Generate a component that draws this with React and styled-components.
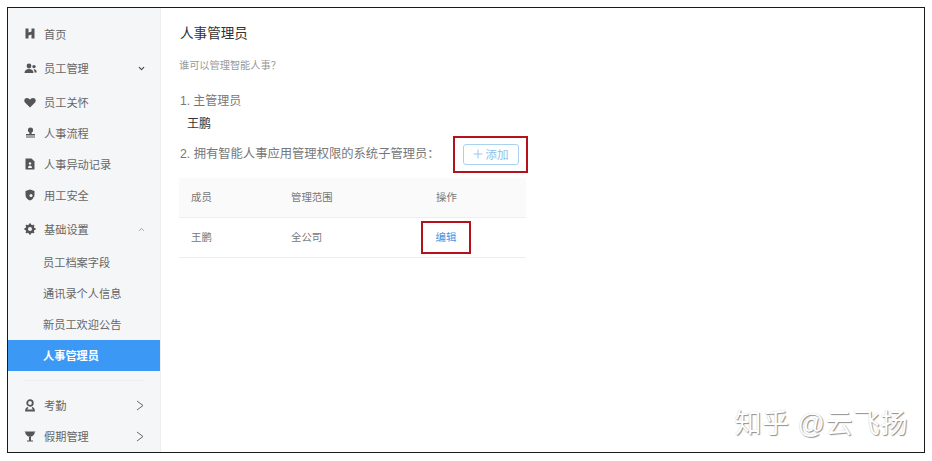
import React from 'react'
import styled, { createGlobalStyle } from 'styled-components'
import { ChevronDown, ChevronUp, Plus } from 'lucide-react'

const FONT = '"Liberation Sans", "Noto Sans CJK SC", sans-serif'

const GlobalStyle = createGlobalStyle`
  html, body { margin: 0; padding: 0; background: #fff; }
  body { width: 932px; height: 461px; overflow: hidden; font-family: ${FONT}; }
`

const Page = styled.div`
  width: 932px;
  height: 461px;
  padding: 7px 7px 8px 7px;
  box-sizing: border-box;
  position: relative;
`

const Frame = styled.div`
  display: flex;
  height: 100%;
  box-sizing: border-box;
  border: 1px solid #1a1a1a;
  overflow: hidden;
`

const Sidebar = styled.div`
  width: 152px;
  flex-shrink: 0;
  background: #f5f6f8;
  border-right: 1px solid #eceef0;
  padding-top: 9px;
  box-sizing: content-box;
`

const MenuRow = styled.div`
  display: flex;
  align-items: center;
  box-sizing: border-box;
  height: ${p => p.$h || 31}px;
  padding: 0 14px ${p => (p.$h ? 0 : 2)}px 15px;
  font-size: 11.2px;
  color: ${p => (p.$active ? '#fff' : '#666')};
  background: ${p => (p.$active ? '#3b99f5' : 'transparent')};
  font-weight: ${p => (p.$active ? 600 : 400)};
`

const SubRow = styled(MenuRow)`
  padding-left: 35px;
`

const IconSlot = styled.span`
  width: 14px;
  margin-right: 7px;
  flex-shrink: 0;
  display: flex;
  align-items: center;
  justify-content: center;
  color: #555;
`

const Label = styled.span`
  flex: 1;
  white-space: nowrap;
`

const Divider = styled.div`
  height: 1px;
  background: #ebedef;
  margin: 9px 16px 6px 16px;
`

const Arrow = styled.svg`
  margin-right: 2px;
  flex-shrink: 0;
`

const Content = styled.div`
  flex: 1;
  padding: 17px 0 0 18px;
  color: #666;
`

const Title = styled.div`
  font-size: 13.6px;
  line-height: 18px;
  color: #333;
  padding-left: 1px;
`

const Hint = styled.div`
  font-size: 10.2px;
  line-height: 14px;
  color: #999;
  margin-top: 16px;
`

const Step = styled.div`
  font-size: 12px;
  line-height: 16px;
  color: #777;
  margin-top: 20px;
  padding-left: 1px;
`

const AdminName = styled.div`
  font-size: 12px;
  line-height: 16px;
  color: #333;
  margin: 7px 0 0 8px;
`

const StepRow = styled.div`
  display: flex;
  align-items: center;
  width: 346px;
  margin-top: 9px;
  height: 26px;
  font-size: 12.3px;
  color: #777;
`

const StepText = styled.span`
  padding-left: 1px;
  margin-top: -3px;
  white-space: nowrap;
`

const AddWrap = styled.div`
  margin-left: auto;
  margin-right: -3px;
  flex-shrink: 0;
  box-sizing: border-box;
  width: 75px;
  height: 37px;
  border: 2px solid #b3121d;
  display: flex;
  align-items: center;
  justify-content: center;
`

const AddButton = styled.div`
  box-sizing: border-box;
  width: 56px;
  height: 21px;
  padding-right: 2px;
  border: 1px solid #a9d2f2;
  border-radius: 3px;
  display: flex;
  align-items: center;
  justify-content: center;
  gap: 1px;
  color: #8dc0ea;
  font-size: 11.5px;
`

const Table = styled.div`
  width: 347px;
  margin-top: 11px;
`

const TableRow = styled.div`
  display: grid;
  grid-template-columns: 100px 145px 1fr;
  align-items: center;
  height: ${p => p.$h}px;
  padding-left: 12px;
  box-sizing: border-box;
  font-size: 10.4px;
  color: #777;
  background: ${p => p.$bg || 'transparent'};
  border-bottom: 1px solid #eeeeee;
`

const Cell = styled.span`
  padding-bottom: 2px;
`

const EditBox = styled.span`
  box-sizing: border-box;
  display: flex;
  align-items: center;
  justify-content: center;
  width: 50px;
  height: 33px;
  padding-bottom: 2px;
  margin-left: -15px;
  border: 2px solid #b3121d;
  color: #4a94e0;
`

const Watermark = styled.div`
  position: absolute;
  right: 24px;
  bottom: 23px;
  font-size: 27px;
  line-height: 28px;
  letter-spacing: 0.5px;
  color: #fff;
  text-shadow: 1px 1px 1px #8f8f8f, 0 0 1px #c4c4c4;
  white-space: nowrap;
`

const HomeIcon = () => (
  <svg width="10" height="11" viewBox="0 0 10 11" fill="#555">
    <path d="M0.500 0.500h3v4l3-1V.5h3v10h-3V6.500l-3 1v3h-3z" />
  </svg>
)

const StaffIcon = () => (
  <svg width="13" height="11" viewBox="0 0 13 11" fill="#555">
    <circle cx="5" cy="3" r="2.400" />
    <path d="M0.500 10c0-2.600 2-4 4.500-4s4.500 1.400 4.500 4z" />
    <circle cx="10" cy="3.600" r="1.700" />
    <path d="M10.400 6.200c1.300.2 2.300 1.500 2.300 3.300h-2.100c0-1.200-.4-2.400-1.200-3.100z" />
  </svg>
)

const HeartIcon = () => (
  <svg width="12" height="11" viewBox="0 0 12 11" fill="#555">
    <path d="M6 10.500L1 5.600C-.5 3.900.4 1 2.900 1 4.300 1 5.400 1.800 6 2.800 6.600 1.800 7.700 1 9.100 1c2.500 0 3.400 2.900 1.900 4.600z" />
  </svg>
)

const StampIcon = () => (
  <svg width="11" height="11" viewBox="0 0 11 11" fill="#555">
    <circle cx="5.500" cy="3" r="2.600" />
    <path d="M4.400 5h2.200v2H10v1.600H1V7h3.400zM1 9.400h9v1.100H1z" />
  </svg>
)

const DocIcon = () => (
  <svg width="10" height="12" viewBox="0 0 10 12" fill="#555">
    <path d="M0.500 0.500h6l3 3v8h-9z" />
    <circle cx="5" cy="5.400" r="1.200" fill="#f5f6f8" />
    <path d="M3 10c0-1.600.9-2.600 2-2.600S7 8.400 7 10z" fill="#f5f6f8" />
  </svg>
)

const ShieldIcon = () => (
  <svg width="10" height="12" viewBox="0 0 10 12" fill="#555">
    <path d="M5 0.500L9.500 2v4c0 3-2.200 4.700-4.500 5.500C2.700 10.700.5 9 .5 6V2z" />
    <circle cx="6" cy="6.500" r="1.500" fill="#f5f6f8" />
    <path d="M8 8.500h2v1.500H8z" fill="#f5f6f8" />
  </svg>
)

const GearIcon = () => (
  <svg width="12" height="12" viewBox="0 0 24 24" fill="none" stroke="#555">
    <circle cx="12" cy="12" r="6.500" strokeWidth="5" />
    <path d="M12 1v4M12 19v4M1 12h4M19 12h4M4.200 4.200l2.800 2.800M17 17l2.800 2.800M4.200 19.800L7 17M17 7l2.800-2.800" strokeWidth="4" />
  </svg>
)

const PinIcon = () => (
  <svg width="10" height="13" viewBox="0 0 10 13" fill="none" stroke="#555" strokeWidth="1.800">
    <circle cx="5" cy="4" r="2.800" />
    <path d="M3 8.500C1.800 9 1 10 1 11.500h8C9 10 8.200 9 7 8.500" />
  </svg>
)

const TreeIcon = () => (
  <svg width="12" height="12" viewBox="0 0 12 12" fill="#555">
    <path d="M0.500 1.500h11L10 3.500h1L8 6.500H4L1 3.500h1z" />
    <path d="M5 6.500h2V11H5zM3 10.500h6v1H3z" />
  </svg>
)

const RightArrow = () => (
  <Arrow width="8" height="11" viewBox="0 0 8 11" fill="none" stroke="#666" strokeWidth="1">
    <path d="M1 1l6 4.500L1 10" />
  </Arrow>
)

const mainItems = [
  { icon: <StaffIcon />, label: '员工管理', h: 36, arrow: 'down' },
  { icon: <HeartIcon />, label: '员工关怀', h: 32 },
  { icon: <StampIcon />, label: '人事流程' },
  { icon: <DocIcon />, label: '人事异动记录' },
  { icon: <ShieldIcon />, label: '用工安全' },
  { icon: <GearIcon />, label: '基础设置', h: 36, arrow: 'up' },
]

const subItems = ['员工档案字段', '通讯录个人信息', '新员工欢迎公告']

const App = () => (
  <Page>
    <GlobalStyle />
    <Frame>
      <Sidebar>
        <MenuRow $h={33}>
          <IconSlot><HomeIcon /></IconSlot>
          <Label>首页</Label>
        </MenuRow>
        {mainItems.map(item => (
          <MenuRow key={item.label} $h={item.h}>
            <IconSlot>{item.icon}</IconSlot>
            <Label>{item.label}</Label>
            {item.arrow === 'down' && <ChevronDown size={9} color="#444" strokeWidth={3} />}
            {item.arrow === 'up' && <ChevronUp size={9} color="#888" strokeWidth={2} />}
          </MenuRow>
        ))}
        {subItems.map(label => (
          <SubRow key={label}><Label>{label}</Label></SubRow>
        ))}
        <SubRow $active><Label>人事管理员</Label></SubRow>
        <Divider />
        <MenuRow $h={36}>
          <IconSlot><PinIcon /></IconSlot>
          <Label>考勤</Label>
          <RightArrow />
        </MenuRow>
        <MenuRow $h={26}>
          <IconSlot><TreeIcon /></IconSlot>
          <Label>假期管理</Label>
          <RightArrow />
        </MenuRow>
      </Sidebar>
      <Content>
        <Title>人事管理员</Title>
        <Hint>谁可以管理智能人事？</Hint>
        <Step>1. 主管理员</Step>
        <AdminName>王鹏</AdminName>
        <StepRow>
          <StepText>2. 拥有智能人事应用管理权限的系统子管理员：</StepText>
          <AddWrap>
            <AddButton><Plus size={14} strokeWidth={1.500} />添加</AddButton>
          </AddWrap>
        </StepRow>
        <Table>
          <TableRow $h={40} $bg="#fafafa">
            <Cell>成员</Cell>
            <Cell>管理范围</Cell>
            <Cell>操作</Cell>
          </TableRow>
          <TableRow $h={40}>
            <Cell>王鹏</Cell>
            <Cell>全公司</Cell>
            <EditBox>编辑</EditBox>
          </TableRow>
        </Table>
      </Content>
    </Frame>
    <Watermark>知乎 @云飞扬</Watermark>
  </Page>
)

export default App
